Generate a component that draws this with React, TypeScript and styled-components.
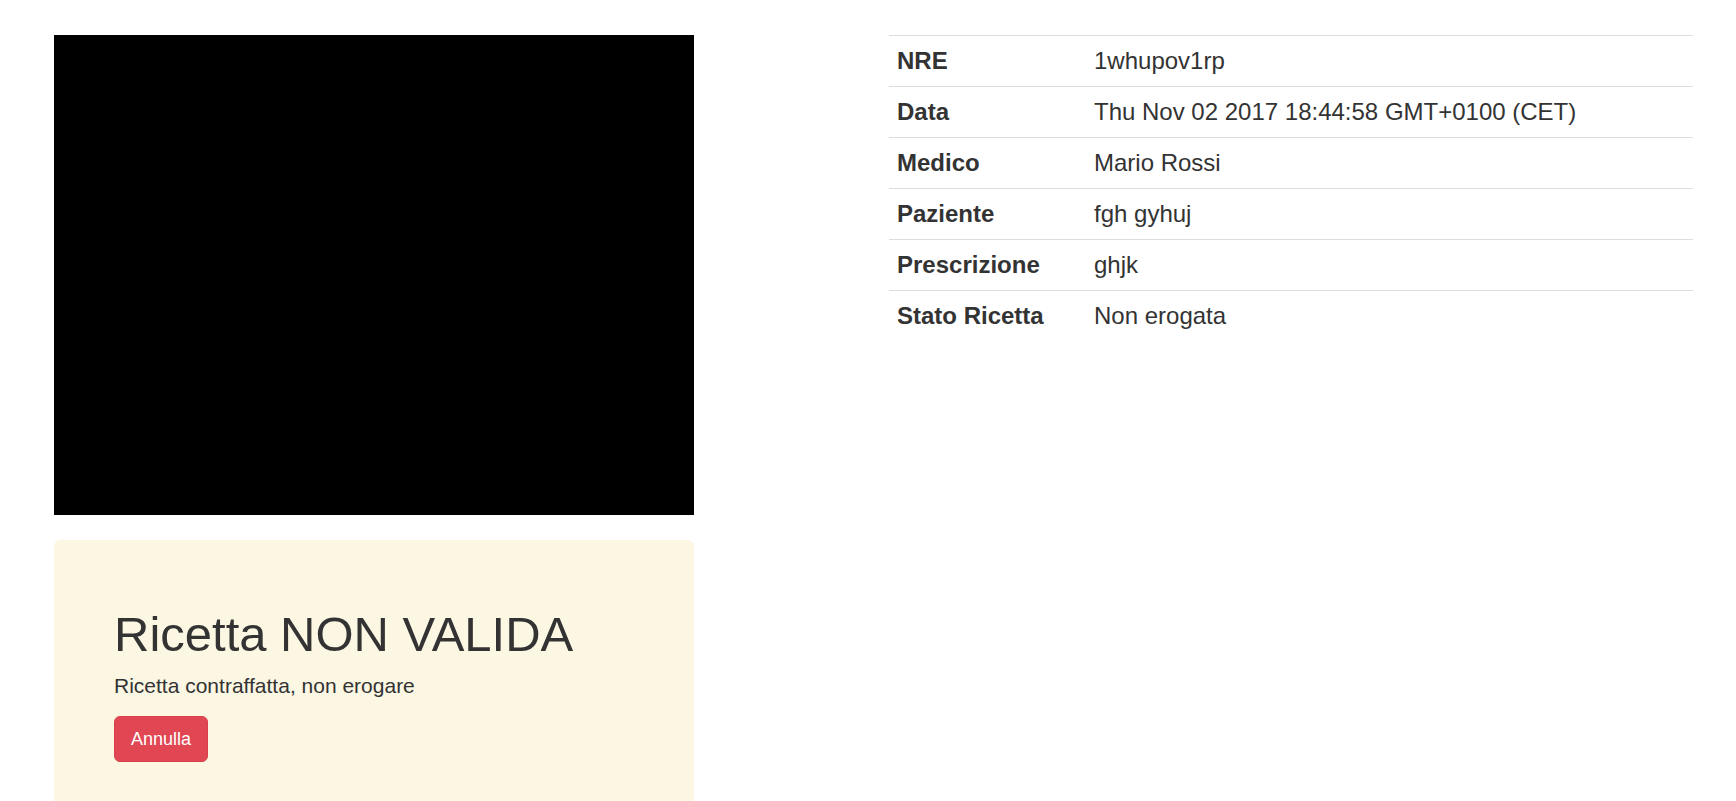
import React from "react";
import styled, { createGlobalStyle } from "styled-components";

const GlobalStyle = createGlobalStyle`
  html, body {
    margin: 0;
    padding: 0;
    overflow: hidden;
    background: #ffffff;
  }
  body {
    font-family: "Liberation Sans", Arial, Helvetica, sans-serif;
    font-size: 14px;
    line-height: 1.42857143;
    color: #333333;
  }
  * { box-sizing: border-box; }
`;

const Page = styled.div`
  display: flex;
  align-items: flex-start;
  gap: 195px;
  padding: 35px 43px 0 54px;
`;

const LeftColumn = styled.div`
  width: 640px;
  flex: none;
  display: flex;
  flex-direction: column;
  gap: 25px;
`;

const Video = styled.div`
  width: 640px;
  height: 480px;
  background: #000000;
`;

const Jumbotron = styled.div`
  background: #fcf7e3;
  border-radius: 6px;
  padding: 48px 60px;
`;

const Title = styled.h1`
  margin: 20px 0 10px;
  font-size: 49px;
  font-weight: 400;
  line-height: 53px;
  color: #333333;
`;

const Lead = styled.p`
  margin: 0 0 15px;
  font-size: 21px;
  line-height: 30px;
`;

const Button = styled.button`
  font-family: inherit;
  font-size: 18px;
  line-height: 1.3333333;
  padding: 10px 16px;
  border-radius: 6px;
  border: 1px solid #d9404b;
  background: #e04753;
  color: #ffffff;
  cursor: pointer;
`;

const RightColumn = styled.div`
  flex: 1;
  min-width: 0;
`;

const Table = styled.table`
  width: 100%;
  border-collapse: collapse;
  border-spacing: 0;
  font-size: 24px;
  line-height: 34px;
`;

const Row = styled.tr`
  & > * {
    border-top: 1px solid #dddddd;
  }
`;

const Label = styled.th`
  width: 197px;
  padding: 8px;
  text-align: left;
  font-weight: 700;
  vertical-align: top;
`;

const Value = styled.td`
  padding: 8px;
  vertical-align: top;
`;

const rows: [string, string][] = [
  ["NRE", "1whupov1rp"],
  ["Data", "Thu Nov 02 2017 18:44:58 GMT+0100 (CET)"],
  ["Medico", "Mario Rossi"],
  ["Paziente", "fgh gyhuj"],
  ["Prescrizione", "ghjk"],
  ["Stato Ricetta", "Non erogata"],
];

export default function App() {
  return (
    <>
      <GlobalStyle />
      <Page>
        <LeftColumn>
          <Video />
          <Jumbotron>
            <Title>Ricetta NON VALIDA</Title>
            <Lead>Ricetta contraffatta, non erogare</Lead>
            <Button type="button">Annulla</Button>
          </Jumbotron>
        </LeftColumn>
        <RightColumn>
          <Table>
            <tbody>
              {rows.map(([k, v]) => (
                <Row key={k}>
                  <Label>{k}</Label>
                  <Value>{v}</Value>
                </Row>
              ))}
            </tbody>
          </Table>
        </RightColumn>
      </Page>
    </>
  );
}
